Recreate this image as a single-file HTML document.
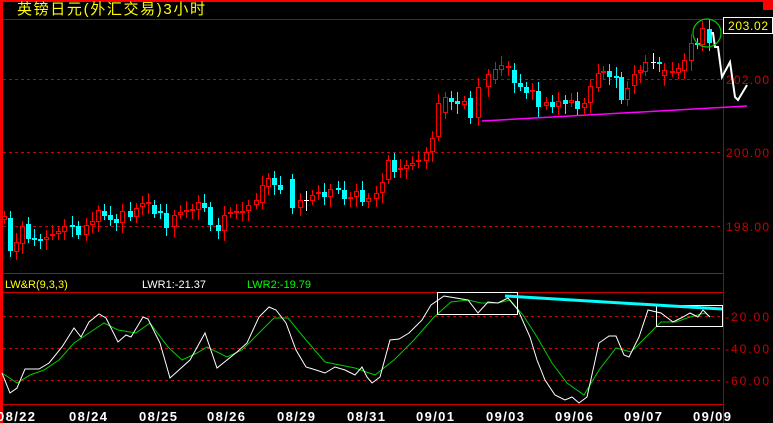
<!DOCTYPE html>
<html><head><meta charset="utf-8"><style>
html,body{margin:0;padding:0;background:#000;width:773px;height:423px;overflow:hidden}
svg{display:block}
text{font-family:"Liberation Sans","Noto Sans CJK SC",sans-serif}
</style></head><body>
<svg id="s" width="773" height="423" viewBox="0 0 773 423" xmlns="http://www.w3.org/2000/svg">
<rect width="773" height="423" fill="#000"/>
<rect x="0" y="0" width="773" height="2" fill="#f00"/>
<rect x="0" y="0" width="3" height="423" fill="#f00"/>
<rect x="763" y="0" width="10" height="10" fill="#f00"/>
<text x="17" y="14" fill="#ff0" font-size="15" textLength="188" lengthAdjust="spacing" font-family="'Liberation Sans','WenQuanYi Zen Hei',sans-serif">英镑日元(外汇交易)3小时</text>
<line x1="3" y1="19.5" x2="723" y2="19.5" stroke="#a00"/>
<line x1="723.5" y1="19" x2="723.5" y2="423" stroke="#a00"/>
<g stroke="#c00" stroke-dasharray="3,3">
<line x1="3" y1="79.5" x2="723" y2="79.5"/>
<line x1="3" y1="152.5" x2="723" y2="152.5"/>
<line x1="3" y1="226.5" x2="723" y2="226.5"/>
<line x1="3" y1="316.5" x2="723" y2="316.5"/>
<line x1="3" y1="348.5" x2="723" y2="348.5"/>
<line x1="3" y1="380.5" x2="723" y2="380.5"/>
</g>
<g stroke="#c00">
<line x1="3" y1="273.5" x2="723" y2="273.5"/>
<line x1="3" y1="292.5" x2="723" y2="292.5"/>
<line x1="3" y1="404.5" x2="723" y2="404.5"/>
</g>
<g fill="#c00" font-size="12">
<text x="726" y="84" textLength="43">202.00</text>
<text x="726" y="157" textLength="43">200.00</text>
<text x="726" y="231" textLength="43">198.00</text>
<text x="725" y="321" textLength="44">-20.00</text>
<text x="725" y="353" textLength="44">-40.00</text>
<text x="725" y="385" textLength="44">-60.00</text>
</g>
<rect x="723.5" y="17.5" width="49" height="16" fill="#000" stroke="#fff"/>
<text x="728" y="30" fill="#ff0" font-size="12" textLength="40">203.02</text>
<line x1="482" y1="121" x2="747" y2="106" stroke="#f0f" stroke-width="1.5"/>
<g id="c"></g>
<polyline points="711,33 713,33 715,47 718,47 722,77 730,62 735,97 738,100 747,85" fill="none" stroke="#fff" stroke-width="2"/>
<circle cx="707" cy="33" r="14" fill="none" stroke="#0c0" stroke-width="1.2"/>
<text x="5" y="288" fill="#ff0" font-size="11">LW&amp;R(9,3,3)</text>
<text x="142" y="288" fill="#fff" font-size="11">LWR1:-21.37</text>
<text x="247" y="288" fill="#0f0" font-size="11">LWR2:-19.79</text>
<polyline fill="none" stroke="#0c0" stroke-width="1" points="2,373 17,383 30,375 44,370 59,360 74,343 89,333 104,323 118,330 136,333 150,323 168,347 182,360 197,353 207,347 227,357 242,350 259,333 274,318 288,318 306,340 325,362 340,365 355,368 375,375 394,360 414,340 434,317 451,302 468,300 481,303 498,303 510,300 523,315 537,337 552,363 567,383 584,395 599,370 616,348 631,352 646,337 661,322 676,322 690,317 705,313 710,317"/>
<polyline fill="none" stroke="#fff" stroke-width="1" points="2,373 10,393 17,388 25,369 39,369 49,363 62,347 74,328 81,337 89,322 99,314 106,318 118,342 126,335 131,337 143,317 148,319 160,343 170,378 190,360 205,333 217,368 237,352 247,343 259,317 269,307 276,310 286,323 296,350 306,367 316,370 325,373 335,367 345,370 355,375 362,367 367,377 372,383 380,377 390,340 399,339 409,333 422,320 431,305 444,296 456,298 468,300 478,313 488,302 498,303 508,298 518,310 530,337 537,360 545,380 555,395 565,400 572,397 579,403 587,397 599,343 609,336 616,336 624,355 629,357 639,337 648,310 661,313 673,322 683,317 690,313 698,317 703,310 710,317"/>
<rect x="437.5" y="292.5" width="80" height="22" fill="none" stroke="#fff"/>
<rect x="656.5" y="305.5" width="66" height="21" fill="none" stroke="#fff"/>
<line x1="505" y1="296" x2="722" y2="309" stroke="#0ff" stroke-width="3"/>
<g fill="#fff" font-size="13" font-weight="bold" font-family="'Liberation Mono',monospace">
<text x="-3" y="421" textLength="38">08/22</text><text x="69" y="421" textLength="38">08/24</text><text x="139" y="421" textLength="38">08/25</text><text x="207" y="421" textLength="38">08/26</text><text x="277" y="421" textLength="38">08/29</text><text x="347" y="421" textLength="38">08/31</text><text x="416" y="421" textLength="38">09/01</text><text x="486" y="421" textLength="38">09/03</text><text x="555" y="421" textLength="38">09/06</text><text x="624" y="421" textLength="38">09/07</text><text x="693" y="421" textLength="38">09/09</text>
</g>
</svg>
<script>
var d=[[4,216,220,'r'],[10,218,251,'c'],[16,242,252,'r'],[22,226,244,'r'],[28,224,239,'c'],[34,238,240,'c'],[40,239,241,'c'],[46,237,240,'r'],[52,234,236,'r'],[58,231,234,'r'],[64,226,232,'r'],[72,225,227,'c'],[78,226,235,'c'],[86,225,235,'r'],[92,221,225,'r'],[98,210,222,'r'],[104,211,216,'c'],[110,215,220,'c'],[116,219,223,'c'],[122,211,223,'r'],[130,211,217,'c'],[136,208,217,'r'],[142,203,207,'r'],[148,202,204,'r'],[154,205,214,'c'],[160,211,213,'c'],[166,213,228,'c'],[174,215,227,'r'],[180,212,215,'r'],[186,210,212,'r'],[192,209,211,'r'],[198,202,210,'r'],[204,203,208,'c'],[210,207,225,'c'],[218,225,231,'c'],[224,215,231,'r'],[230,212,214,'r'],[236,211,213,'r'],[242,211,213,'r'],[248,205,211,'r'],[256,200,205,'r'],[262,185,203,'r'],[268,178,187,'r'],[274,178,185,'c'],[280,185,190,'c'],[292,179,208,'c'],[300,200,208,'r'],[306,200,201,'w'],[312,195,201,'r'],[318,192,194,'r'],[324,192,197,'c'],[330,189,197,'r'],[338,188,190,'c'],[344,190,199,'c'],[350,197,199,'r'],[356,191,197,'r'],[362,190,202,'c'],[368,198,202,'r'],[376,193,199,'r'],[382,182,193,'r'],[388,160,180,'r'],[394,160,172,'c'],[400,168,170,'r'],[406,165,169,'r'],[412,163,166,'r'],[418,160,162,'r'],[426,152,161,'r'],[432,138,152,'r'],[438,103,137,'r'],[445,97,113,'r'],[451,98,102,'c'],[457,101,104,'c'],[464,101,105,'r'],[470,98,118,'c'],[478,87,118,'r'],[488,74,87,'r'],[495,69,80,'r'],[501,65,70,'r'],[508,66,68,'r'],[514,70,83,'c'],[520,83,87,'c'],[526,87,93,'c'],[532,90,92,'r'],[538,91,107,'c'],[546,102,106,'r'],[552,102,107,'c'],[558,101,107,'r'],[565,100,104,'c'],[571,100,103,'r'],[577,101,109,'c'],[584,103,108,'r'],[590,86,103,'r'],[598,73,88,'r'],[603,71,73,'r'],[609,71,77,'c'],[616,76,78,'c'],[621,77,100,'c'],[627,88,100,'r'],[634,74,86,'r'],[640,70,73,'r'],[645,62,72,'r'],[653,62,63,'w'],[659,62,64,'c'],[664,70,76,'r'],[672,71,73,'r'],[678,68,73,'r'],[684,60,71,'r'],[691,43,61,'r'],[697,43,45,'c'],[702,28,45,'r'],[709,29,43,'c']];
var g=document.getElementById('c'),s='';
var col={r:'#f00',c:'#0ff',w:'#fff'};
d.forEach(function(a,i){var x=a[0],t=a[1],b=a[2],c=col[a[3]];
s+='<line x1="'+(x+0.5)+'" y1="'+(t-5-(i%3)*2)+'" x2="'+(x+0.5)+'" y2="'+(b+4+(i%4)*2)+'" stroke="'+c+'"/>';
if(a[3]=='c')s+='<rect x="'+(x-2)+'" y="'+t+'" width="5" height="'+Math.max(2,b-t)+'" fill="'+c+'"/>';
else if(a[3]=='w')s+='<line x1="'+(x-2)+'" y1="'+t+'.5" x2="'+(x+3)+'" y2="'+t+'.5" stroke="#fff"/>';
else s+='<rect x="'+(x-1.5)+'" y="'+(t+0.5)+'" width="4" height="'+Math.max(1,b-t-1)+'" fill="#000" stroke="'+c+'"/>';});
g.innerHTML=s;
</script>
</body></html>
